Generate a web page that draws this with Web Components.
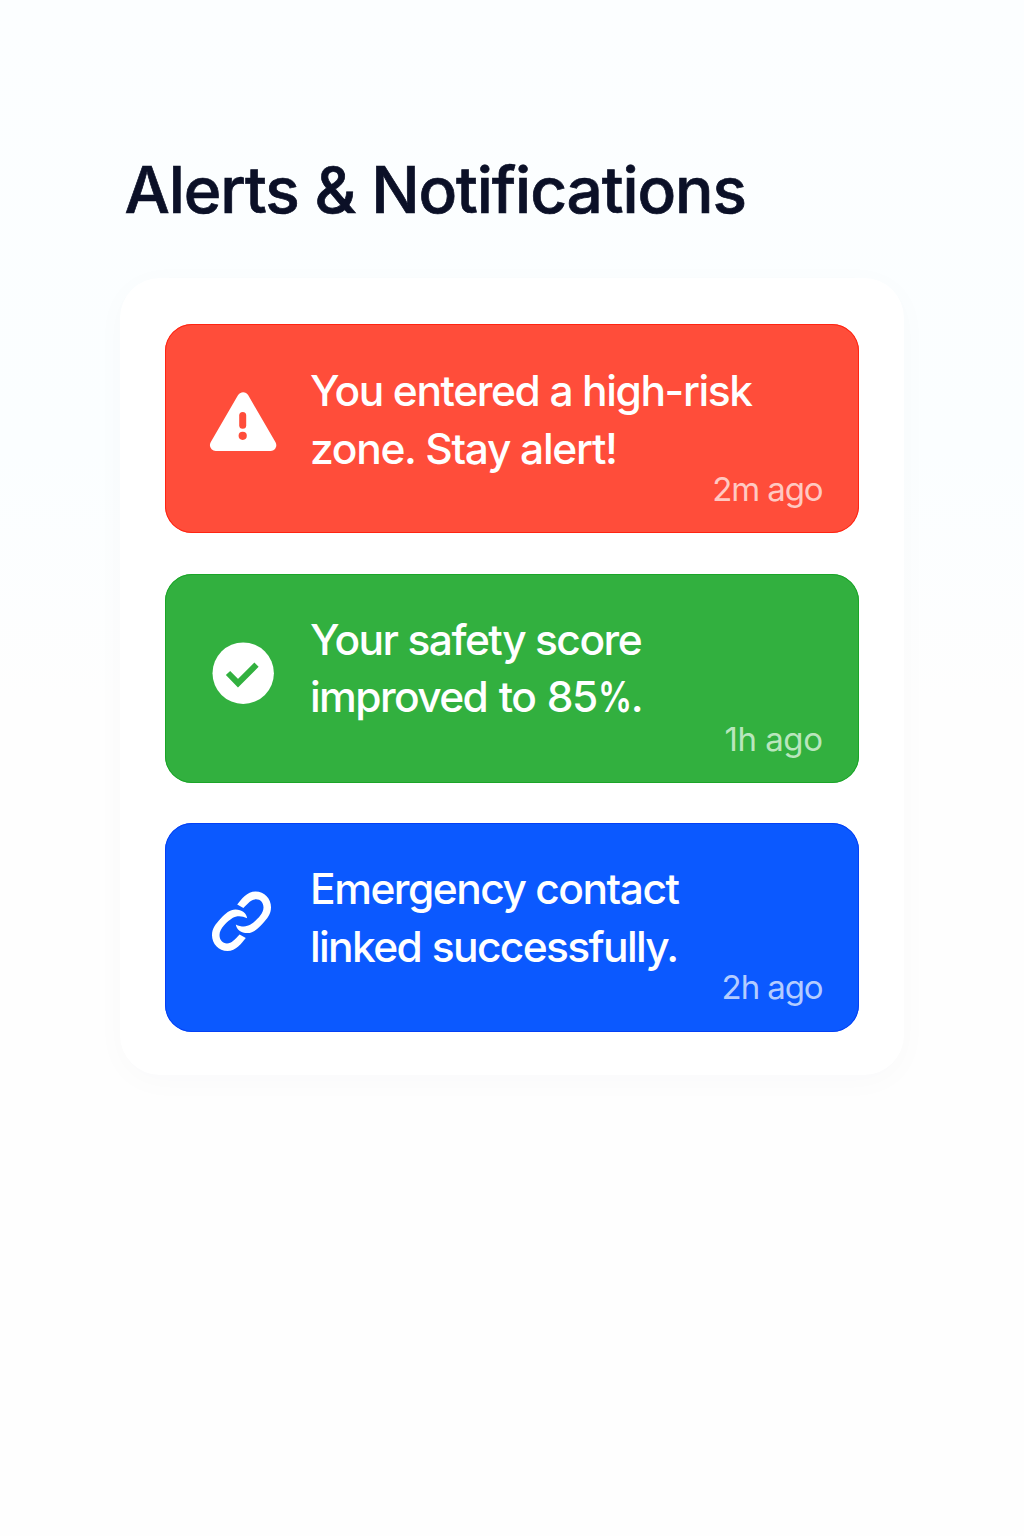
<!DOCTYPE html>
<html lang="en">
<head>
<meta charset="utf-8">
<title>Alerts &amp; Notifications</title>
<style>
html, body { margin: 0; height: 100%; }
body { font-family: Inter, "Liberation Sans", sans-serif; background: #fefefe; }
.pct { display: inline-block; font-weight: 600; transform: scaleX(.8); transform-origin: 0 50%; margin: 0 -8.500px 0 1.500px; }
</style>
</head>
<body>
<alerts-page>
  <span slot="title">Alerts &amp; Notifications</span>
  <alert-card tone="danger" icon="warning">
    <text-line style="--track:-1.4px">You entered a high-risk</text-line>
    <text-line style="--track:-1.3px">zone. Stay alert!</text-line>
    <span slot="time">2m ago</span>
  </alert-card>
  <alert-card tone="success" icon="check">
    <text-line style="--track:-1.5px">Your safety score</text-line>
    <text-line style="--track:-1.6px; word-spacing:1.8px">improved to 85<span class="pct">%</span>.</text-line>
    <span slot="time">1h ago</span>
  </alert-card>
  <alert-card tone="info" icon="link">
    <text-line style="--track:-1.5px">Emergency contact</text-line>
    <text-line style="--track:-1.65px; word-spacing:1px">linked successfully.</text-line>
    <span slot="time">2h ago</span>
  </alert-card>
</alerts-page>
<script>
class TextLine extends HTMLElement {
  constructor() {
    super();
    this.attachShadow({ mode: 'open' }).innerHTML = `
      <style>:host { display: block; white-space: nowrap; letter-spacing: var(--track, 0); }</style><slot></slot>`;
  }
}
customElements.define('text-line', TextLine);

const HALF_LINK = 'M37.2 24.800C41.500 19.500 47 11.700 55.500 11.700C64.500 11.700 71 19 71 27.500C71 34.500 67.500 38.500 62.500 44C57.500 49.500 53 53.300 47.500 53.300C41 53.300 36.500 49.500 35.800 44.600C41 47.200 46.500 47.300 50.500 44.800C55.500 41.500 63.500 34.500 63.500 27.800C63.500 22.800 60.500 19.400 56 19.400C51.500 19.400 48 23.300 43.400 28.300Z';
const ICONS = {
  warning: `<path d="M43.100 18 L70.500 65.200 H15.700 Z" fill="#fff" stroke="#fff" stroke-width="11.600" stroke-linejoin="round"/>
    <path d="M42.700 35.500V45.200" stroke="var(--bg)" stroke-width="7" stroke-linecap="round"/>
    <circle cx="42.700" cy="55.800" r="4.100" fill="var(--bg)"/>`,
  check: `<circle cx="43.200" cy="43.200" r="30.700" fill="#fff"/>
    <path d="M28 43 L38 53.200 L56.500 34.700" fill="none" stroke="var(--bg)" stroke-width="6"/>`,
  link: `<g transform="translate(0 .8)"><path d="${HALF_LINK}" fill="#fff"/><path d="${HALF_LINK}" fill="#fff" transform="rotate(180 41.500 41.500)"/></g>`
};

class AlertCard extends HTMLElement {
  connectedCallback() {
    if (this.shadowRoot) return;
    this.attachShadow({ mode: 'open' }).innerHTML = `
      <style>
        :host {
          --bg: #ff4d3a; --edge: #ff2412; --time: #ffc9c2; --top: 38px; --time-track: -1.1px; --msg: 111px;
          display: flex; box-sizing: border-box; height: 209px; padding: 0 36.5px 0 35px;
          border-radius: 27px; background: var(--bg); color: #fff;
          box-shadow: inset 0 0 0 1px var(--edge);
        }
        :host([tone=success]) { --bg: #32b03f; --edge: #1ba528; --time: #b9e6bd; --top: 37px; --time-track: -0.45px; --msg: 112px; }
        :host([tone=info]) { --bg: #0b59ff; --edge: #0540f5; --time: #b4ccff; --top: 37px; --time-track: -1.1px; }
        svg { flex: none; width: 86px; height: 86px; margin-top: 56px; }
        .body { flex: 1; display: flex; flex-direction: column; padding: var(--top) 0 0 24px; }
        .message { font-size: 42.5px; font-weight: 500; line-height: 57.5px; height: var(--msg); }
        .time { align-self: flex-end; font-size: 33px; line-height: 33px; letter-spacing: var(--time-track); color: var(--time); }
      </style>
      <svg viewBox="0 0 86 86" aria-hidden="true">${ICONS[this.getAttribute('icon')]}</svg>
      <div class="body">
        <div class="message"><slot></slot></div>
        <div class="time"><slot name="time"></slot></div>
      </div>`;
  }
}
customElements.define('alert-card', AlertCard);

class AlertsPage extends HTMLElement {
  constructor() {
    super();
    this.attachShadow({ mode: 'open' }).innerHTML = `
      <style>
        :host {
          display: flex; flex-direction: column; box-sizing: border-box; min-height: 1536px;
          padding: 150px 120px 0;
          background: linear-gradient(180deg, #fcfeff 0, #fbfeff 450px, #fefefe 700px, #fefefe 100%);
        }
        h1 { margin: 0 0 48px 4.5px; font-size: 64px; line-height: 80px; font-weight: 500; letter-spacing: -1.1px; color: #0b1027; -webkit-text-stroke: 0.7px #0b1027; white-space: nowrap; }
        .panel {
          display: flex; flex-direction: column; gap: 40.5px; box-sizing: border-box;
          height: 797px; padding: 46px 45px 0; border-radius: 40px; background: #fff;
          box-shadow: 0 6px 32px rgba(20, 40, 70, .025);
        }
      </style>
      <h1><slot name="title"></slot></h1>
      <div class="panel"><slot></slot></div>`;
  }
}
customElements.define('alerts-page', AlertsPage);
</script>
</body>
</html>
